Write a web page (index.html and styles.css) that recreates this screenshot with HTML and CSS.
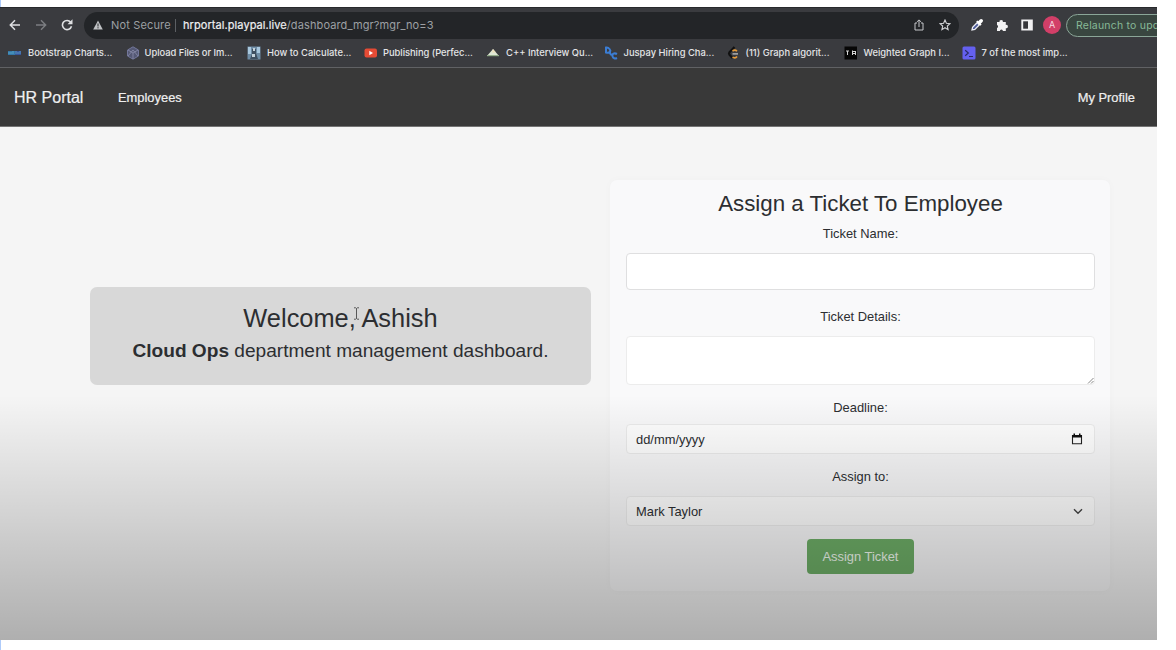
FILE: index.html
```html
<!DOCTYPE html>
<html lang="en">
<head>
<meta charset="utf-8">
<title>HR Portal</title>
<link rel="stylesheet" href="styles.css">
</head>
<body>
<div class="window">
  <div class="toolbar">
    <svg class="nav-icon" width="12" height="12" viewBox="0 0 12 12"><path d="M11 6H1.5M6 1.3L1.3 6 6 10.7" fill="none" stroke="#dfe0e2" stroke-width="1.5"/></svg>
    <svg class="nav-icon" width="12" height="12" viewBox="0 0 12 12"><path d="M1 6h9.500M6 1.300L10.700 6 6 10.700" fill="none" stroke="#7c7e82" stroke-width="1.400"/></svg>
    <svg class="nav-icon" width="12" height="12" viewBox="0 0 12 12"><path d="M9.700 3.200A4.600 4.600 0 1 0 10.500 7.300" fill="none" stroke="#dfe0e2" stroke-width="1.600"/><path d="M11.500.3v5H6.500z" fill="#dfe0e2"/></svg>
    <div class="omnibox">
      <svg width="10" height="10" viewBox="0 0 10 10"><path d="M5 .5L9.800 9.500H.2z" fill="#bfc1c4"/><path d="M5 3.500v3M5 7.200v1.200" stroke="#25282b" stroke-width="1"/></svg>
      <span class="security">Not Secure</span>
      <span class="separator"></span>
      <span class="url"><span class="host">hrportal.playpal.live</span><span class="path">/dashboard_mgr?mgr_no=3</span></span>
      <svg class="share" width="12" height="12" viewBox="0 0 12 12"><path d="M4 4H2v7h8V4H8M6 8V1M3.800 3L6 .9 8.200 3" fill="none" stroke="#c5c7ca"/></svg>
      <svg class="star" width="12" height="12" viewBox="0 0 12 12"><path d="M6 1l1.400 3.300 3.600.3-2.700 2.400.8 3.600L6 8.700l-3.100 1.900.8-3.600L1 4.600l3.600-.3z" fill="none" stroke="#d0d2d5" stroke-width="1.100"/></svg>
    </div>
    <div class="extensions">
      <svg width="14" height="14" viewBox="0 0 14 14"><path d="M2 12l.6-2.800 5.200-5.200 2.200 2.200L4.800 11.400z" fill="#4c5a9a" stroke="#eceef5" stroke-width="1.300"/><path d="M6.800 3l4.200 4.200" stroke="#fff" stroke-width="1.700"/><path d="M9 5l2.200-2.200" stroke="#fff" stroke-width="3.600" stroke-linecap="round"/></svg>
      <svg width="14" height="14" viewBox="0 0 14 14"><path d="M2 4h2.600a1.700 1.700 0 1 1 3.300 0h2.900v2.900a1.700 1.700 0 1 1 0 3.300V13H7.900a1.500 1.500 0 0 0-3 0H2v-3a1.600 1.600 0 0 0 0-3z" fill="#f3f3f4"/></svg>
      <svg width="14" height="14" viewBox="0 0 14 14"><path d="M1.300 1.500h11.500v11H1.300z" fill="#f1f1f2"/><path d="M3.200 3.300h4.800v7.400H3.200z" fill="#35363a"/></svg>
    </div>
    <span class="avatar">A</span>
    <span class="relaunch">Relaunch to update</span>
  </div>
  <div class="bookmarks">
    <div class="bookmark"><svg width="14" height="14" viewBox="0 0 14 14"><path d="M0 5h7v4H0z" fill="#3478a8"/><path d="M7 5h6v4H7z" fill="#36549c"/><path d="M1 6v2M3 6v2M5 5v3M8 5v3M10 6v2M12 5v3" stroke="#69b5d4" stroke-width=".7"/></svg><span>Bootstrap Charts...</span></div>
    <div class="bookmark"><svg width="14" height="14" viewBox="0 0 14 14"><path d="M7 .8l5.500 3.200v6L7 13.200 1.500 10V4z" fill="#555975" stroke="#72769a"/><path d="M2 4l5 3 5-3M7 7v6M2 10l5-6 5 6" fill="none" stroke="#8b8eab" stroke-width=".8"/></svg><span>Upload Files or Im...</span></div>
    <div class="bookmark"><svg width="14" height="14" viewBox="0 0 14 14"><path d="M.5.500h13v13H.5z" fill="#6f8da6"/><path d="M1 1h3v7H1zM10 1h3v6h-3z" fill="#a8c7de"/><path d="M5 3h4v4l2 6H3l2-5z" fill="#3f4f60"/><path d="M6 2h2v3H6zM5 8h3v3H5z" fill="#c5d2db"/></svg><span>How to Calculate...</span></div>
    <div class="bookmark"><svg width="14" height="14" viewBox="0 0 14 14"><rect x=".5" y="2.500" width="12.500" height="9" rx="2" fill="#e54b35"/><path d="M5.300 4.800v4.400L9 7z" fill="#fff"/></svg><span>Publishing (Perfec...</span></div>
    <div class="bookmark"><svg width="14" height="14" viewBox="0 0 14 14"><path d="M7 3l6 7H1z" fill="#dfe7d5"/><path d="M1 9h12v1.200H1z" fill="#94ad8b"/><path d="M7 3l3 3.500H6z" fill="#eee0bc"/></svg><span>C++ Interview Qu...</span></div>
    <div class="bookmark"><svg width="14" height="14" viewBox="0 0 14 14"><path d="M2 1.500v5c4 1 5-1.500 3.500-3.500S2 1.500 2 1.500zM6.500 4c-1 3-.5 5 2 5M13 8c-3-1.500-5 0-4.500 2.200S11 13 13 12" fill="none" stroke="#3b7dd4" stroke-width="2"/></svg><span>Juspay Hiring Cha...</span></div>
    <div class="bookmark"><svg width="14" height="14" viewBox="0 0 14 14"><path d="M8.500 1L3.500 6.200q-1 1.300 0 2.600L6.500 12" fill="none" stroke="#111" stroke-width="2.200"/><path d="M6.500 5q2.500-1.800 4.500.2M6.500 11q2.500 2 4.500-.6" fill="none" stroke="#e69b3a" stroke-width="1.600"/><path d="M6.500 7.900H12" stroke="#b8b8b8" stroke-width="1.400"/></svg><span>(11) Graph algorit...</span></div>
    <div class="bookmark"><svg width="14" height="14" viewBox="0 0 14 14"><path d="M.5.500h12.500v13H.5z" fill="#060606"/><path d="M2 5h3M3.500 5v4M8.500 4.500V9M8.500 5.500h3M8.500 7.500h3M11.500 5v4" stroke="#d4d4d4" stroke-width="1"/></svg><span>Weighted Graph I...</span></div>
    <div class="bookmark"><svg width="14" height="14" viewBox="0 0 14 14"><rect x=".5" y=".5" width="13" height="13" rx="1.500" fill="#6460ef"/><path d="M3.200 4.200L6.300 7 3.200 9.800M7 10.500h4" fill="none" stroke="#292a65" stroke-width="1.200"/></svg><span>7 of the most imp...</span></div>
  </div>
  <nav class="navbar">
    <span class="brand">HR Portal</span>
    <span class="nav-link employees">Employees</span>
    <span class="nav-link profile">My Profile</span>
  </nav>
  <main class="content">
    <section class="welcome">
      <h1>Welcome, Ashish</h1>
      <p><strong>Cloud Ops</strong> department management dashboard.</p>
      <svg class="cursor" width="7" height="13" viewBox="0 0 7 13"><path d="M1 .8h1.700l.8.7.8-.7H6M3.500 1.500v10M1 12.200h1.700l.8-.7.8.7H6" fill="none" stroke="#4a4a4a" stroke-width=".9"/></svg>
    </section>
    <form class="ticket">
      <h2>Assign a Ticket To Employee</h2>
      <label class="label-name">Ticket Name:</label>
      <div class="field field-name"></div>
      <label class="label-details">Ticket Details:</label>
      <div class="field field-details"><svg width="7" height="7" viewBox="0 0 7 7"><path d="M1 6.500L6.500 1M4 6.500L6.500 4" stroke="#888" stroke-width="1"/></svg></div>
      <label class="label-deadline">Deadline:</label>
      <div class="field field-row"><span>dd/mm/yyyy</span><svg width="12" height="12" viewBox="0 0 12 12"><path d="M1.500 2.500h9v8.300h-9z" fill="none" stroke="#222" stroke-width="1.100"/><path d="M1 2h10v2.500H1zM2.500.5h1.500V3H2.500zM8 .5h1.500V3H8z" fill="#111"/></svg></div>
      <label class="label-assign">Assign to:</label>
      <div class="field field-row field-select"><span>Mark Taylor</span><svg class="chevron" width="10" height="7" viewBox="0 0 10 7"><path d="M1 1.200l4 4 4-4" fill="none" stroke="#444" stroke-width="1.400"/></svg></div>
      <button type="button">Assign Ticket</button>
    </form>
  </main>
  <div class="shade"></div>
</div>
</body>
</html>
```

FILE: styles.css
```css
* { box-sizing: border-box; }
body {
  margin: 0;
  height: 650px;
  padding: 7px 0 10px;
  overflow: hidden;
  background: linear-gradient(#aecbfa, #aecbfa) 0 0 / 1px 100% no-repeat #fff;
  font-family: "Liberation Sans", Arial, sans-serif;
  color: #2c2e31;
}
svg { display: block; flex: none; }
.window {
  position: relative;
  width: 1157px;
  height: 633px;
  overflow: hidden;
  background: #f5f5f5;
}
.toolbar {
  display: flex;
  align-items: center;
  height: 34px;
  padding: 1px 0 0 9px;
  border-top: 1px solid #28292c;
  background: #3a3b3f;
  font-family: Inter, sans-serif;
  white-space: nowrap;
}
.toolbar > * { flex: none; }
.nav-icon { margin-right: 14px; }
.omnibox {
  display: flex;
  align-items: center;
  width: 875px;
  height: 27px;
  margin-left: -3px;
  padding: 0 8px 0 9px;
  border-radius: 14px;
  background: #232528;
  color: #9da0a4;
  font-size: 11px;
}
.security { width: 59px; margin-left: 8px; letter-spacing: 0.15px; }
.separator { width: 1px; height: 13px; margin: 0 7px 0 5px; background: #5c5f63; }
.host { color: #eeeff0; letter-spacing: 0.07px; -webkit-text-stroke: 0.2px; }
.path { letter-spacing: 0.12px; }
.share { margin-left: auto; }
.star { margin-left: 14px; }
.extensions { display: flex; gap: 11px; margin-left: 11px; }
.avatar {
  width: 18px;
  height: 18px;
  margin-left: 9px;
  border-radius: 50%;
  background: #d23f68;
  color: #f6dbe3;
  font-size: 9px;
  line-height: 18px;
  text-align: center;
}
.relaunch {
  width: 130px;
  height: 23px;
  margin-left: 5px;
  padding-left: 9px;
  border: 1px solid #8ba698;
  border-radius: 12px;
  background: #394640;
  color: #87b997;
  font-size: 10.5px;
  line-height: 21px;
  letter-spacing: 0.2px;
}
.bookmarks {
  display: grid;
  grid-template-columns: 117.500px 121.500px 117px 122px 117.500px 122px 118px 118px 119px;
  align-items: center;
  height: 27px;
  padding: 0 0 3px 8px;
  border-bottom: 1px solid #606164;
  background: #3a3b3f;
  color: #e4e5e7;
  font: 500 9.400px Inter, sans-serif;
}
.bookmark { display: flex; align-items: center; gap: 6px; white-space: nowrap; }
.bookmark:nth-child(2), .bookmark:nth-child(4) { gap: 5px; letter-spacing: -0.04px; }
.navbar {
  display: flex;
  align-items: center;
  height: 59px;
  padding: 0 22px 0 14px;
  border-bottom: 1px solid #747474;
  background: #393939;
  color: #efefef;
}
.brand { width: 104px; padding-top: 2px; font-size: 16px; -webkit-text-stroke: 0.2px; }
.nav-link { font-size: 12.900px; -webkit-text-stroke: 0.2px; }
.profile { margin-left: auto; }
.content {
  display: grid;
  grid-template-columns: 501px 500px;
  gap: 19px;
  align-items: start;
  padding: 53px 0 0 90px;
}
.welcome {
  position: relative;
  height: 98px;
  margin-top: 107px;
  padding-top: 16px;
  border-radius: 7px;
  background: #d8d8d8;
  text-align: center;
}
h1, h2, p { margin: 0; font-weight: 400; }
h1 { font-size: 25.400px; line-height: 31px; }
.welcome p { margin-top: 4px; font-size: 19.100px; line-height: 26px; }
.cursor { position: absolute; left: 263px; top: 20px; }
.ticket {
  display: flex;
  flex-direction: column;
  height: 411px;
  padding: 10px 15px 0 16px;
  border-radius: 7px;
  background: #f9f9fa;
  box-shadow: 0 0 8px rgba(0, 0, 0, 0.025);
  font-size: 12.900px;
  text-align: center;
}
h2 { font-size: 22.300px; line-height: 28px; }
label { display: block; line-height: 18px; }
.label-name { margin: 7px 0 10px; }
.label-details { margin: 18px 0 10px; }
.label-deadline { margin: 14px 0 7px; }
.label-assign { margin: 14px 0 10px; }
.field { border: 1px solid #ececec; border-radius: 4px; background: #fff; }
.field-name { height: 37px; border-color: #dfdfe0; }
.field-details { display: flex; align-items: flex-end; justify-content: flex-end; height: 49px; }
.field-row {
  display: flex;
  align-items: center;
  justify-content: space-between;
  height: 30px;
  padding: 0 11px 0 9px;
}
.field-select { border-color: #eee; }
button {
  align-self: center;
  width: 107px;
  height: 35px;
  margin-top: 13px;
  padding: 0;
  border: 0;
  border-radius: 4px;
  background: #6eae67;
  color: #f1faf0;
  font: 12.900px "Liberation Sans", Arial, sans-serif;
}
.shade {
  position: absolute;
  inset: 388px 0 0;
  pointer-events: none;
  background: linear-gradient(transparent, rgba(0, 0, 0, 0.285));
}
```
